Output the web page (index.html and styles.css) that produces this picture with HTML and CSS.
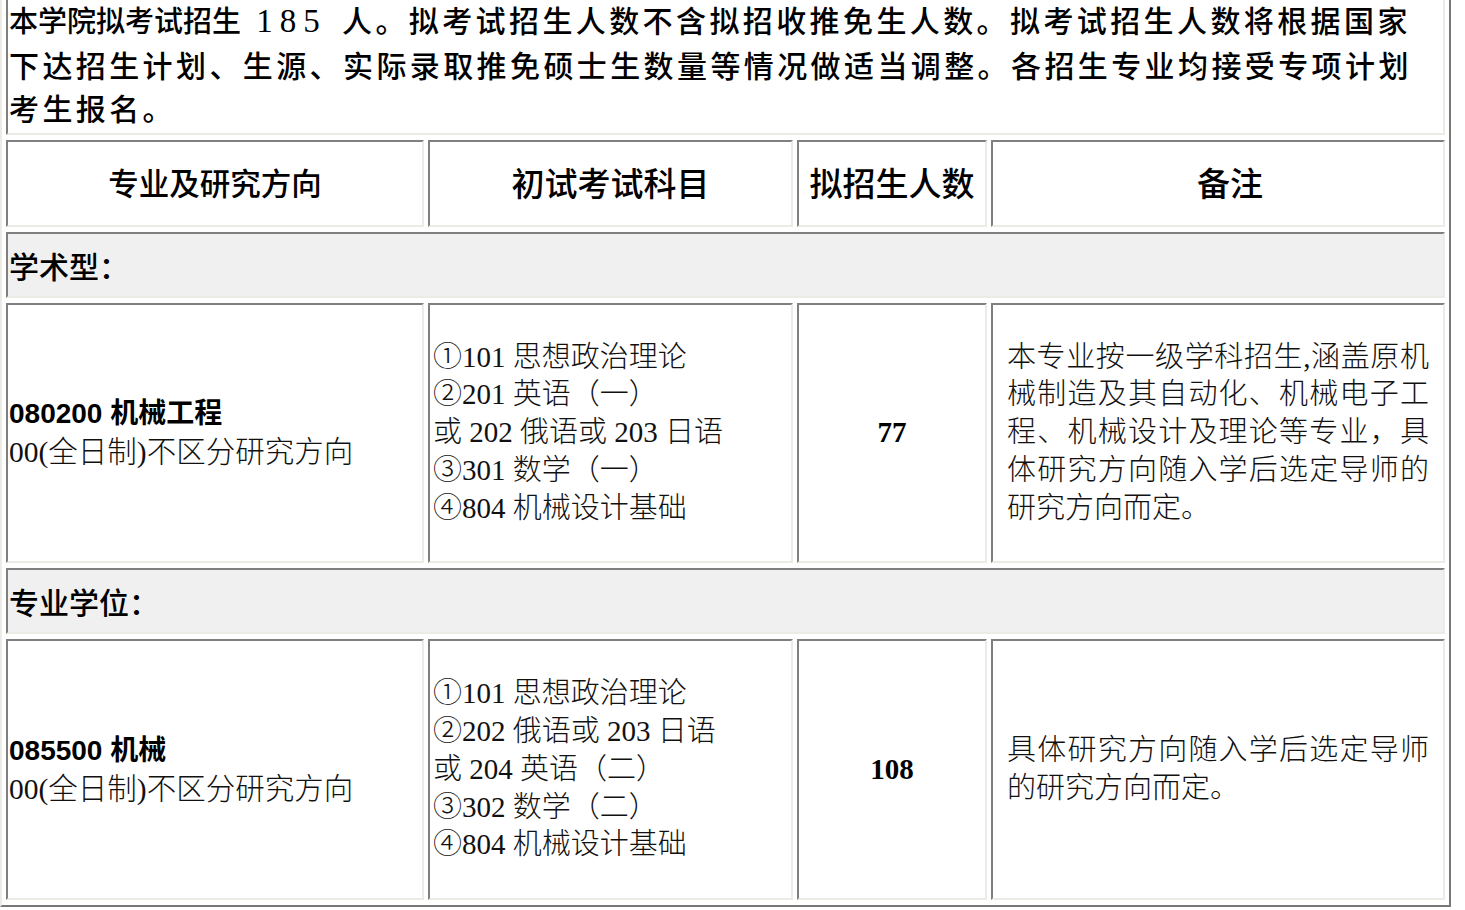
FILE: index.html
```html
<!DOCTYPE html>
<html lang="zh-CN">
<head>
<meta charset="utf-8">
<title>招生计划</title>
<link rel="stylesheet" href="styles.css">
</head>
<body>
<table class="plan">
  <colgroup>
    <col class="c1"><col class="c2"><col class="c3"><col class="c4">
  </colgroup>
  <tr>
    <td colspan="4" class="intro"><span class="lead">本学院拟考试招生</span><span class="num">&nbsp;185&nbsp;</span>人。拟考试招生人数不含拟招收推免生人数。拟考试招生人数将根据国家下达招生计划、生源、实际录取推免硕士生数量等情况做适当调整。各招生专业均接受专项计划考生报名。</td>
  </tr>
  <tr class="head">
    <th class="h-major">专业及研究方向</th>
    <th>初试考试科目</th>
    <th>拟招生人数</th>
    <th class="h-note">备注</th>
  </tr>
  <tr class="group">
    <td colspan="4">学术型：</td>
  </tr>
  <tr class="entry">
    <td class="major">
      <div class="code">080200 机械工程</div>
      <div class="dir">00(全日制)不区分研究方向</div>
    </td>
    <td class="subjects">①101 思想政治理论<br>②201 英语（一）<br>或 202 俄语或 203 日语<br>③301 数学（一）<br>④804 机械设计基础</td>
    <td class="quota">77</td>
    <td class="note">本专业按一级学科招生,涵盖原机械制造及其自动化、机械电子工程、机械设计及理论等专业，具体研究方向随入学后选定导师的研究方向而定。</td>
  </tr>
  <tr class="group">
    <td colspan="4">专业学位：</td>
  </tr>
  <tr class="entry">
    <td class="major">
      <div class="code">085500 机械</div>
      <div class="dir">00(全日制)不区分研究方向</div>
    </td>
    <td class="subjects">①101 思想政治理论<br>②202 俄语或 203 日语<br>或 204 英语（二）<br>③302 数学（二）<br>④804 机械设计基础</td>
    <td class="quota">108</td>
    <td class="note">具体研究方向随入学后选定导师的研究方向而定。</td>
  </tr>
</table>
</body>
</html>
```
FILE: styles.css
```css
html, body {
  margin: 0;
  padding: 0;
  background: #ffffff;
}

body {
  font-family: "Liberation Serif", "Noto Sans CJK SC", serif;
  color: #000;
  overflow: hidden;
}

.plan {
  table-layout: fixed;
  width: 1451px;
  margin-top: -10px;
  border-collapse: separate;
  border-spacing: 4px 5px;
  border: 2px solid;
  border-color: #ecebe6 #777777 #777777 #ecebe6;
  background: #ffffff;
}

.c1 { width: 418px; }
.c2 { width: 365px; }
.c3 { width: 190px; }
.c4 { width: 454px; }

.plan td,
.plan th {
  border: 2px solid;
  border-color: #7f7f7f #ecebe6 #ecebe6 #7f7f7f;
  padding: 1px;
  vertical-align: middle;
  text-align: left;
}

.plan .intro {
  font-size: 30px;
  line-height: 43.5px;
  letter-spacing: 3.4px;
  font-weight: 500;
  padding: 1px 10px 1px 1px;
}

.intro .lead {
  font-size: 29px;
  letter-spacing: 0;
}

.intro .num {
  font-size: 33px;
  line-height: 30px;
  letter-spacing: 7px;
}

.head th {
  font-family: "Noto Sans CJK SC", sans-serif;
  font-weight: 500;
  font-size: 33px;
  line-height: 43px;
  padding: 19px 1px 21px;
  text-align: center;
}

.head .h-major {
  font-size: 30.5px;
}

.head .h-note {
  padding-left: 25px;
}

.group td {
  background: #f0f0f0;
  font-family: "Noto Sans CJK SC", sans-serif;
  font-weight: 500;
  font-size: 30px;
  line-height: 38px;
  padding: 12px 1px;
}

.entry td {
  font-size: 29px;
  line-height: 37.75px;
}

.entry .major {
  padding: 1px;
}

.major .code {
  font-family: "Liberation Sans", "Noto Sans CJK SC", sans-serif;
  font-weight: 700;
  font-size: 28px;
  line-height: 38px;
}

.major .dir {
  font-size: 29.5px;
  line-height: 38px;
  font-weight: 300;
  color: #111;
}

.entry .subjects {
  padding: 34px 3px;
  font-weight: 300;
  color: #111;
}

.entry .quota {
  font-weight: 700;
  text-align: center;
}

.entry .note {
  padding: 34px 14px;
  text-align: justify;
  font-weight: 300;
  color: #111;
}
```
